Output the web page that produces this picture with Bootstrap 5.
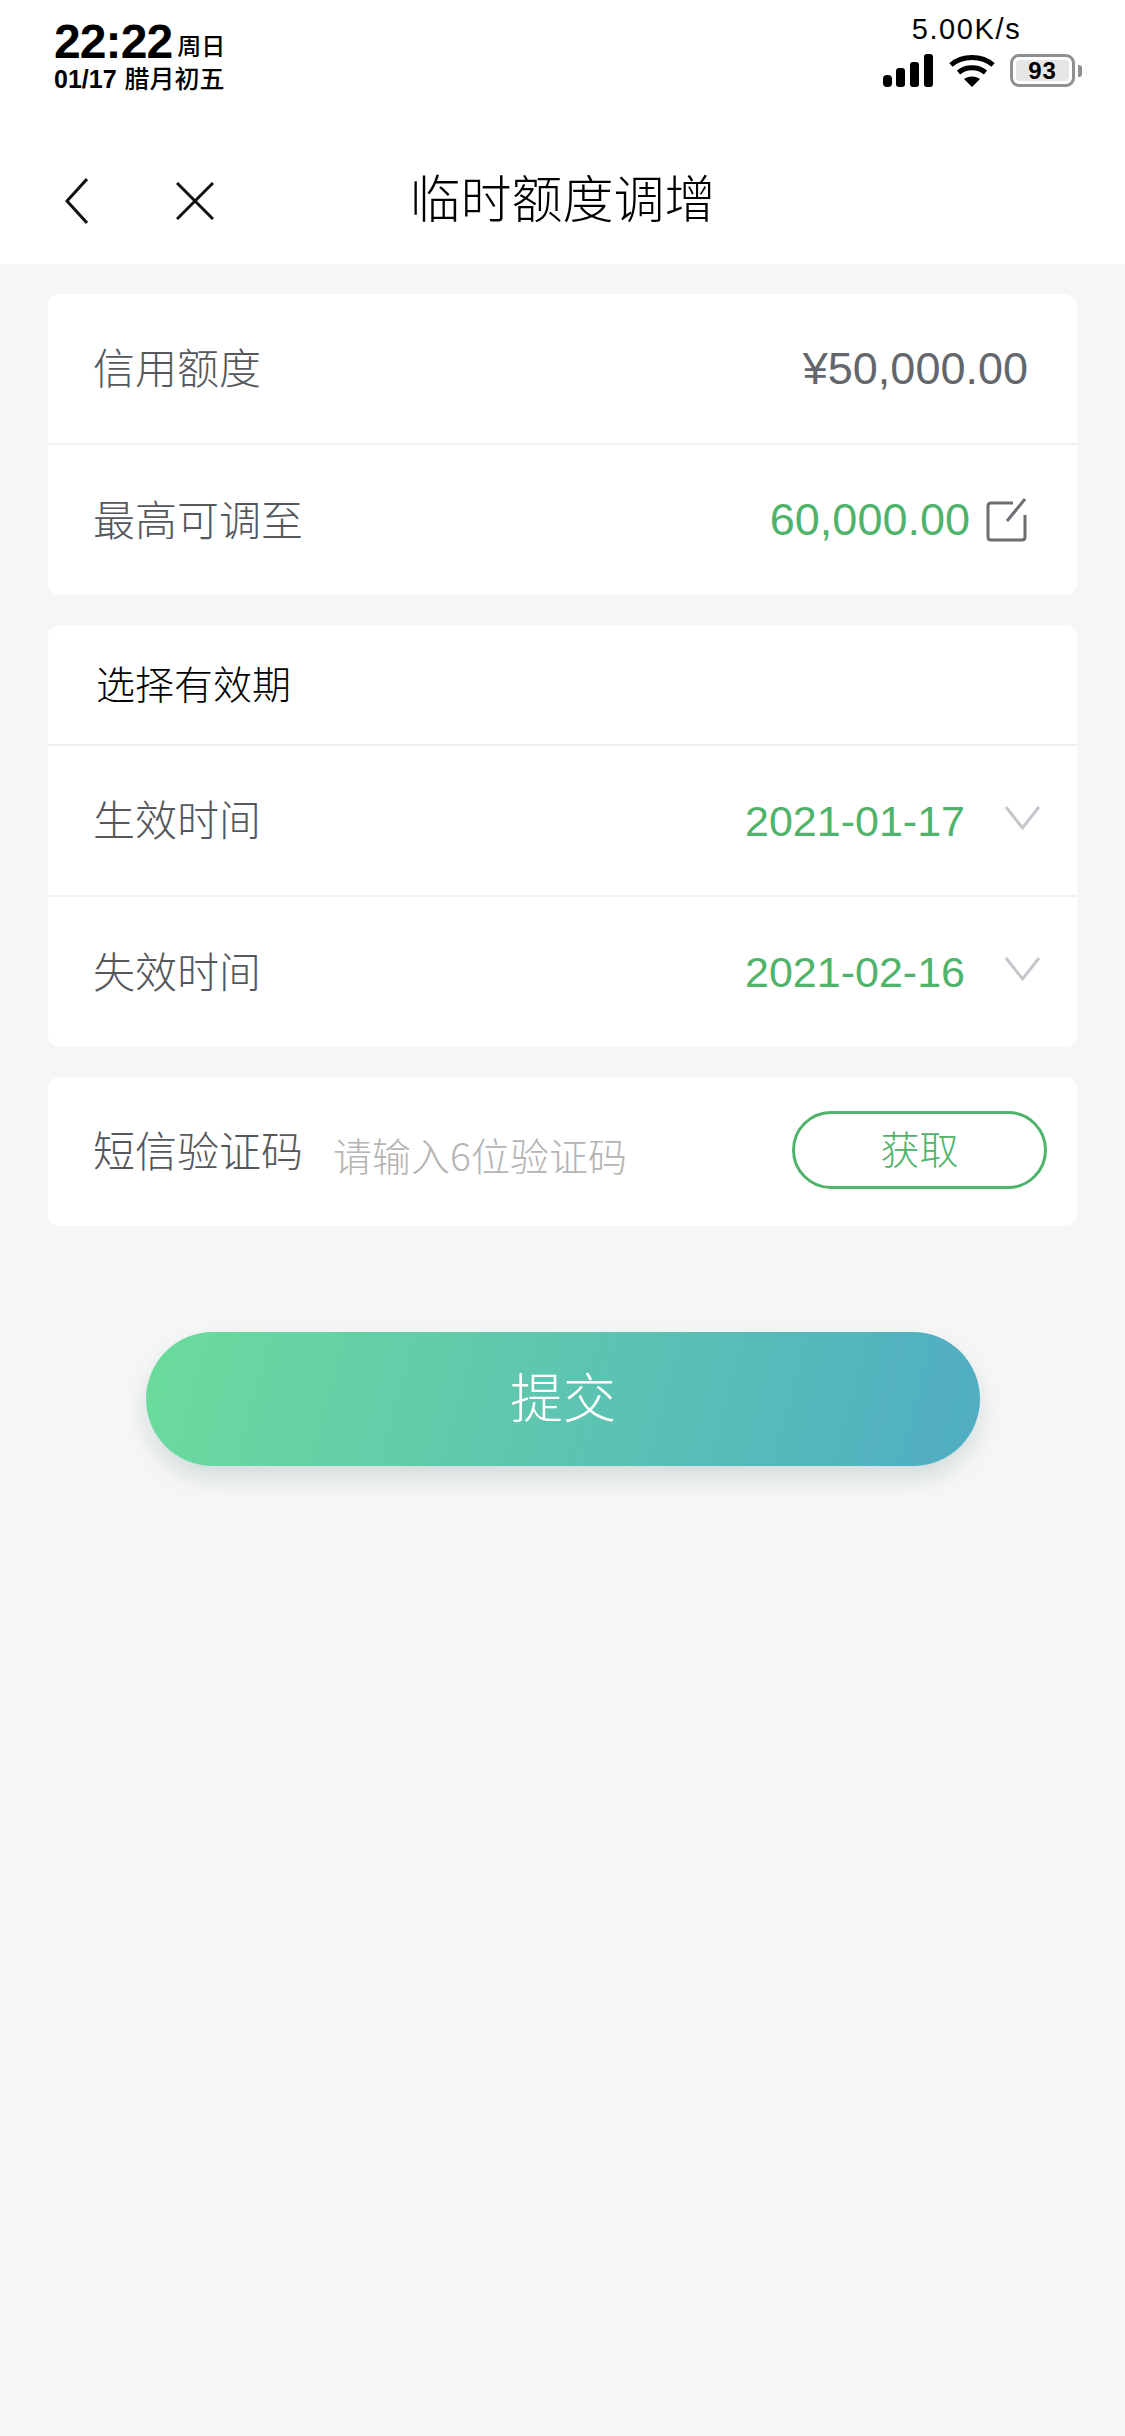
<!DOCTYPE html>
<html lang="zh-CN">
<head>
<meta charset="utf-8">
<title>临时额度调增</title>
<link href="https://cdn.jsdelivr.net/npm/bootstrap@5.3.0/dist/css/bootstrap.min.css" rel="stylesheet">
<style>
body{background:#f6f6f6;font-family:"Liberation Sans","Noto Sans CJK SC",sans-serif;width:1125px;min-height:2436px;color:#000}
.top-head{background:#fff;height:264px}
.status-row{height:110px;padding:14px 50px 0 54px}
.clock-line{line-height:40px;height:40px;margin-top:8px}
.clock-big{font-size:48px;font-weight:700;letter-spacing:-.9px;line-height:40px}
.clock-day{font-size:24px;font-weight:500;margin-left:5px;line-height:30px}
.clock-sub{font-size:25px;font-weight:700;line-height:28px;margin-top:3px;white-space:nowrap}
.clock-sub span{font-size:25px;font-weight:500;margin-left:8px}
.net-speed{font-size:29px;line-height:30px;letter-spacing:1.600px;text-align:center;padding-right:24px}
.bar-icons{gap:15px;margin-top:9px;height:34px}
.batt{width:65px;height:33px;border:3px solid #8f8f8f;border-radius:9px;padding:3px;position:relative}
.batt-fill{background:#e6e6e6;border-radius:3px;height:100%;font-size:24px;font-weight:700;line-height:21px;text-align:center;letter-spacing:1px}
.batt-tip{position:absolute;right:-10px;top:8px;width:4px;height:12px;background:#8f8f8f;border-radius:0 3px 3px 0}
.title-row{height:154px;padding:28px 65px 0;display:grid;grid-template-columns:1fr auto 1fr;align-items:center}
.title-row h1{font-size:51px;font-weight:300;margin:0;line-height:60px;color:#000}
.nav-icons{gap:88px}
.page-body{padding:30px 48px 0 48px}
.panel{background:#fff;border:0;border-radius:12px;margin-bottom:30px;overflow:hidden}
.panel .list-group-item{border:0;border-bottom:2px solid #f0f0f0;padding:0 0 0 45px;height:151px;background:transparent}
.panel .list-group-item:last-child{border-bottom:0;height:150px}
.panel .list-group-item.only-item:last-child{height:149px}
.panel .head-item{height:121px;padding:3px 0 0 48px;font-size:39px;color:#000;font-weight:300}
.lbl{font-size:42px;color:#54575c;line-height:50px;font-weight:300;margin-top:3px}
.val{font-size:45px;color:#63666b;margin-right:49px;line-height:50px}
.val-green{font-size:45px;color:#4fb36b;line-height:50px}
.date-green{font-size:43px;color:#4fb36b;line-height:50px}
.edit-wrap{margin-right:50px;gap:16px}
.pick-wrap{gap:40px;margin-right:37px}
.pick-wrap svg{margin-top:-6px}
.hint{font-family:"Noto Sans CJK SC",sans-serif;font-size:39px;color:#b4b4b4;margin-left:30px;margin-top:5px;line-height:50px;font-weight:300}
.get-btn{width:255px;height:78px;border:3px solid #4fb36b;border-radius:39px;background:#fff;color:#4fb36b;font-size:39px;line-height:1;margin:0 30px 3px 0;padding:0;font-weight:300}
.get-btn:hover{background:#fff;color:#4fb36b;border-color:#4fb36b}
.submit-wrap{padding:76px 0 0 146px}
.submit-btn{width:834px;height:134px;border:0;border-radius:67px;background:linear-gradient(105deg,#6bdc9c,#50adc4);color:#fff;font-size:53px;line-height:1;box-shadow:0 12px 22px rgba(90,130,130,.22);padding:0;font-weight:300}
.submit-btn:hover{color:#fff;background:linear-gradient(105deg,#6bdc9c,#50adc4)}
</style>
</head>
<body>
<header class="top-head">
  <div class="status-row d-flex justify-content-between">
    <div>
      <div class="clock-line d-flex align-items-end"><span class="clock-big">22:22</span><span class="clock-day">周日</span></div>
      <div class="clock-sub">01/17<span>腊月初五</span></div>
    </div>
    <div>
      <div class="net-speed">5.00K/s</div>
      <div class="bar-icons d-flex align-items-center">
        <svg width="52" height="33" viewBox="0 0 52 33"><g fill="#000"><rect x="1" y="21" width="9" height="12" rx="4"/><rect x="14" y="14" width="9" height="19" rx="3"/><rect x="28" y="8" width="9" height="25" rx="3"/><rect x="42" y="0" width="9" height="33" rx="3"/></g></svg>
        <svg width="46" height="33" viewBox="0 0 46 33"><g fill="none" stroke="#000" stroke-width="5"><path d="M2 11 C13 1 33 1 44 11"/><path d="M9.500 18.500 C17 12 29 12 36.500 18.500"/></g><path d="M15 25 C19 21.500 27 21.500 31 25 L23 33 Z" fill="#000"/></svg>
        <div class="batt"><div class="batt-fill">93</div><div class="batt-tip"></div></div>
      </div>
    </div>
  </div>
  <nav class="title-row">
    <div class="nav-icons d-flex align-items-center">
      <svg width="23" height="46" viewBox="0 0 23 46"><path d="M22 1 L2 23 L22 45" fill="none" stroke="#111" stroke-width="3"/></svg>
      <svg width="38" height="38" viewBox="0 0 38 38"><path d="M1 1 L37 37 M37 1 L1 37" fill="none" stroke="#111" stroke-width="3"/></svg>
    </div>
    <h1>临时额度调增</h1>
    <div></div>
  </nav>
</header>
<main class="page-body">
  <div class="card panel">
    <div class="list-group list-group-flush">
      <div class="list-group-item d-flex justify-content-between align-items-center"><span class="lbl">信用额度</span><span class="val">¥50,000.00</span></div>
      <div class="list-group-item d-flex justify-content-between align-items-center"><span class="lbl">最高可调至</span>
        <span class="edit-wrap d-flex align-items-center"><span class="val-green">60,000.00</span>
          <svg width="41" height="44" viewBox="0 0 41 44"><path d="M27 5 H5 Q2 5 2 8 V39 Q2 42 5 42 H36 Q39 42 39 39 V17" fill="none" stroke="#6b6e73" stroke-width="3"/><path d="M21 23 L39 1" fill="none" stroke="#6b6e73" stroke-width="3"/></svg>
        </span></div>
    </div>
  </div>
  <div class="card panel">
    <div class="list-group list-group-flush">
      <div class="list-group-item head-item d-flex align-items-center">选择有效期</div>
      <div class="list-group-item d-flex justify-content-between align-items-center"><span class="lbl">生效时间</span>
        <span class="pick-wrap d-flex align-items-center"><span class="date-green">2021-01-17</span>
          <svg width="35" height="24" viewBox="0 0 35 24"><path d="M1 1 L17.500 22 L34 1" fill="none" stroke="#c4c7cc" stroke-width="3"/></svg></span></div>
      <div class="list-group-item d-flex justify-content-between align-items-center"><span class="lbl">失效时间</span>
        <span class="pick-wrap d-flex align-items-center"><span class="date-green">2021-02-16</span>
          <svg width="35" height="24" viewBox="0 0 35 24"><path d="M1 1 L17.500 22 L34 1" fill="none" stroke="#c4c7cc" stroke-width="3"/></svg></span></div>
    </div>
  </div>
  <div class="card panel">
    <div class="list-group list-group-flush">
      <div class="list-group-item only-item d-flex align-items-center"><span class="lbl">短信验证码</span><span class="hint flex-grow-1">请输入6位验证码</span>
        <button type="button" class="btn get-btn">获取</button></div>
    </div>
  </div>
</main>
<div class="submit-wrap"><button type="button" class="btn submit-btn">提交</button></div>
<script src="https://cdn.jsdelivr.net/npm/bootstrap@5.3.0/dist/js/bootstrap.bundle.min.js"></script>
</body>
</html>
